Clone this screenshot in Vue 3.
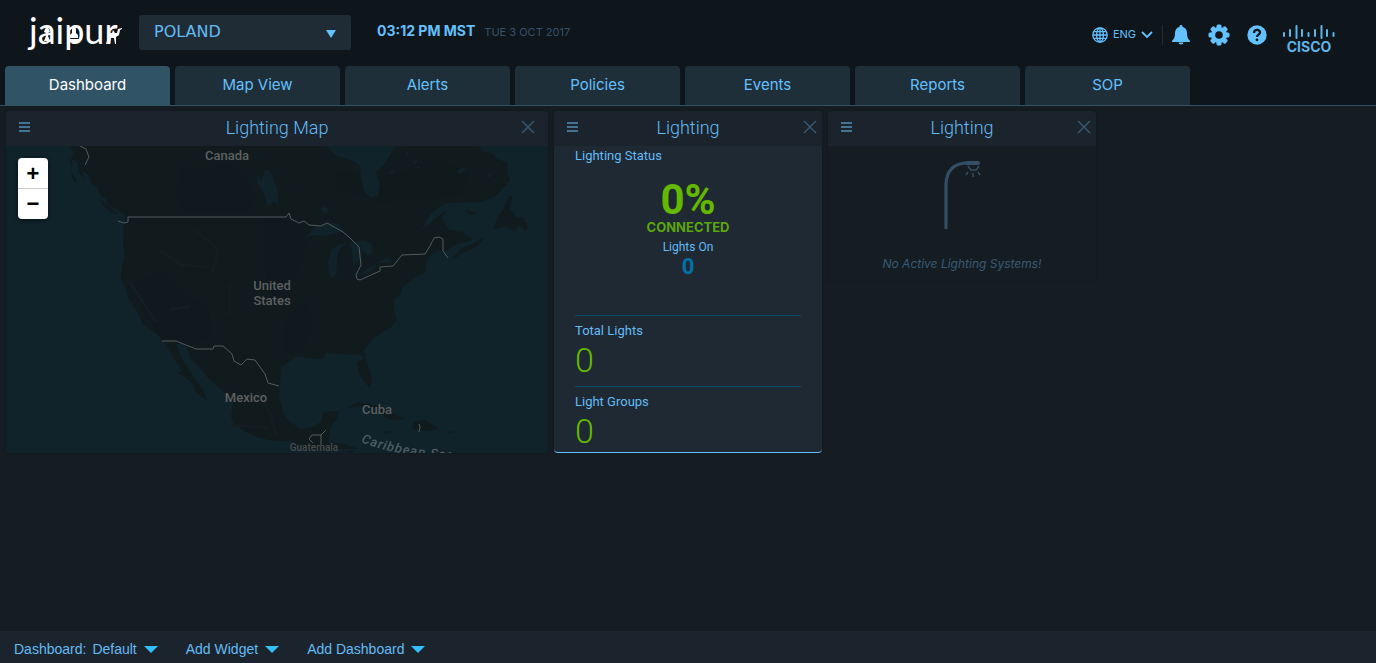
<script setup>
import { ref } from 'vue'

const tabs = ['Dashboard', 'Map View', 'Alerts', 'Policies', 'Events', 'Reports', 'SOP']
const activeTab = ref('Dashboard')
const city = ref('POLAND')
const widgets = [
  { id: 'map', title: 'Lighting Map' },
  { id: 'status', title: 'Lighting' },
  { id: 'empty', title: 'Lighting' },
]
const totals = [
  { label: 'Total Lights', value: 0 },
  { label: 'Light Groups', value: 0 },
]
const menus = [
  { id: 'dash', label: 'Dashboard:', value: 'Default' },
  { id: 'widget', label: 'Add Widget' },
  { id: 'add', label: 'Add Dashboard' },
]
</script>

<template>
  <div class="page">
    <header class="top">
      <svg class="brand" viewBox="0 0 98 50" role="img" aria-label="jaipur">
        <text x="4" y="39" class="brand-text">jaipur</text>
        <g fill="#fff">
          <path d="M19 27l1-3 2-2 2 2 1 3-2 1v3l2 5h-6l2-5v-3z" />
          <path d="M45 30l2-2v-4l2-4 2 4v4l2 2v3h-8zM43 34h12l-3 3h-6z" />
          <path d="M82 31q2-4 5-3l1-3 2 3h2l1-4 4-1v1l-2 1-1 5-3 2v7h-1l-1-6h-3l-1 6h-1v-6l-2 6h-1l2-7z" />
        </g>
      </svg>
      <div class="city">
        <select v-model="city" aria-label="City"><option>POLAND</option></select>
        <svg class="city-arrow" viewBox="0 0 10 8"><path d="M0 0h10L5 8z" /></svg>
      </div>
      <div class="clock"><strong>03:12 PM MST</strong><span>TUE 3 OCT 2017</span></div>
      <div class="tools">
        <button class="lang" type="button">
          <svg width="16" height="16" viewBox="0 0 16 16" fill="none" stroke="currentColor" stroke-width="1.3">
            <circle cx="8" cy="8" r="7.2" /><ellipse cx="8" cy="8" rx="3.4" ry="7.2" /><path d="M8 1v14M1 8h14M2 4.6h12M2 11.4h12" />
          </svg>
          <span>ENG</span>
          <svg width="12" height="8" viewBox="0 0 12 8" fill="none" stroke="currentColor" stroke-width="1.8"><path d="M1 1l5 5 5-5" /></svg>
        </button>
        <button class="tool bell" type="button" aria-label="Notifications">
          <svg width="20" height="20" viewBox="0 0 20 20"><path fill="currentColor" d="M10 0c1 0 1.500.7 1.500 1.700C14.500 2.500 16 5 16 8c0 4 .7 5.700 3 8v1H1v-1c2.300-2.300 3-4 3-8 0-3 1.500-5.500 4.500-6.300C8.500.7 9 0 10 0zM7.500 17.500h5a2.500 2 0 0 1-5 0z" /></svg>
        </button>
        <button class="tool" type="button" aria-label="Settings">
          <svg width="22" height="22" viewBox="0 0 22 22">
            <g fill="currentColor"><rect v-for="a in [0, 45, 90, 135]" :key="a" x="8.500" y="0.500" width="5" height="21" rx="1.500" :transform="`rotate(${a} 11 11)`" /><circle cx="11" cy="11" r="8" /></g>
            <circle cx="11" cy="11" r="3.800" fill="#0f161b" />
          </svg>
        </button>
        <button class="tool" type="button" aria-label="Help">
          <svg width="20" height="20" viewBox="0 0 20 20"><circle cx="10" cy="10" r="9.700" fill="currentColor" /><path d="M7 8c0-4 6-4 6-.6 0 2.200-3 2.300-3 4.600" fill="none" stroke="#0f161b" stroke-width="2.300" /><circle cx="10" cy="14.800" r="1.400" fill="#0f161b" /></svg>
        </button>
        <svg class="cisco" width="54" height="34" viewBox="0 0 54 34" role="img" aria-label="Cisco">
          <g stroke="#5fb4e8" stroke-width="2" stroke-linecap="round">
            <path d="M2 9v3M8 6v6M14.500 2v12M20 6v6M26.500 9v3M33 6v6M39.500 2v12M45 6v6M51.500 9v3" />
          </g>
          <text x="27" y="28" text-anchor="middle" class="cisco-text">CISCO</text>
        </svg>
      </div>
    </header>

    <nav class="tabs">
      <button v-for="t in tabs" :key="t" type="button" class="tab" :class="{ active: t === activeTab }" @click="activeTab = t">{{ t }}</button>
    </nav>

    <main class="board">
      <section v-for="w in widgets" :key="w.id" class="widget" :class="w.id">
        <div class="whead">
          <button type="button" class="icon" aria-label="Widget menu">
            <svg width="11" height="10" viewBox="0 0 11 10"><path fill="#437494" d="M0 0h11v2H0zM0 4h11v2H0zM0 8h11v2H0z" /></svg>
          </button>
          <h2>{{ w.title }}</h2>
          <button type="button" class="icon close" aria-label="Close widget">
            <svg width="14" height="14" viewBox="0 0 14 14"><path stroke="#375b76" stroke-width="1.400" d="M1 1l12 12M13 1L1 13" /></svg>
          </button>
        </div>

        <div v-if="w.id === 'map'" class="mapbody">
          <svg class="world" viewBox="6 146 542 307" preserveAspectRatio="xMidYMid slice">
            <rect x="6" y="146" width="542" height="307" fill="#10222a" />
            <path fill="#111b1d" d="M70 146l5 8-4 4 6 5 2 9 5 8-2-10 6 5 4 9 5 3 3 8 6 4 2 6 8 4 8 5 2 7-3 3 1 8-1 10 2 14-3 10-1 13 5 10 2 8 5 8 5 8 5 12 7 4 8 6 6 7 5 8 4 8 6 7 2 7-4 1 8 4 8 7 2 7 6 6 6 3-4-10-7-10-7-10-6-10-5-10-2-6 7-1 5 7 3 9 8 8 8 10 9 8 10 9 7 8-2 15 5 8 10 7 11 5 12 3 12 1h10l15 8h53l-15-5-16-1 1-9 3-10 6-6 1-7-15 1-3 10-8 5-12 2-11-7-7-10-4-15 1-15 1-14 7-6 9-6 11 2 14 1 5-6 15 1 8 1 8-1 7 4L357 362l2 11 6 10 5 5 2-8-3-12-4-10-1-8 6-8 8-7 12-7 7-8-3-8v-12l6-5 4-10 8-5 6-4 8-4-1-5 5-12 9-4 8-1 10-6 15-4-9-8-14-2-7-12 5-8-16 12-10 9 10-18 15-10 36-1 14-6 8-9 6-7-3-8 1-9-11-4-5-6-9-2-6-8z" />
            <g fill="#0f191f">
              <path d="M180 166l30 4 15-8 20 14 10 20-6 18h-64l-8-16zM265 218l24 2 20 8-5 25-10 28-20 20-10-35zM285 320l20-22 8 25-10 30-20 2z" opacity=".8" />
              <path d="M330 170l60 6 50-18 30 16-9 22-80 6-40-12z" fill="#101a1c" /><path d="M127 286l20 28 12 22 28 8 25-4-4-35-24-12-24-22z" opacity=".45" />
            </g>
            <g fill="#10222a">
              <path d="M327 146l8 9 20 7 5 4 1 14 3 10 6 8 8-2 2-12-4-12 8-8 7-10 5-8z" />
              <path d="M305 237l10-9 11-6 12 2 7 8-9 1-10 3-10-1zM329 275l-1-13 3-12 7-5 8-2-8 9-1 10-1 12-4 4zM350 243l14-3 8 4 1 9-6 3-5-7-1 10-8 6-1-15zM358 276l9-7 12-6-9 9zM378 263l8-5 8 3-8 2zM257 174l4 8 4-12 6 2 7 20 1 14-5-4-6 4-4-12-6-10zM321 208l5-2 2 5-4 3zM388 173l6-3-1 4zM404 154l4-3 1 5zM412 162l5-2-1 4zM417 166l4 2-4 1zM456 172l6-5 5 3-7 4zM486 177l8-6-4 6z" />
            </g>
            <g fill="#111b1d">
              <path d="M493 230l4-12 7-10 5-12h3l-2 13 7 9 6-1 5 10-3 5-5-7-6 6-10-5zM453 258l7-9 10-4 15-8-7 9-15 7-9 6zM466 209l11 5-8 1zM366 203l5-2 1 5zM347 408l10-6 14 2 11 3 10 6 13 6-13 1-9-5-8-7-13-2zM413 422l12-2 14 9-12 2-14-2zM384 431l9 1-8 2zM446 431l9 1-6 1zM343 451l13-1-5 3zM68 157l4 4 1 8zM71 170l7 14-5-4z" />
              <path d="M100 199l20 16-8-2-10-8z" opacity=".8" />
            </g>
            <g fill="none" stroke="#151e20" stroke-width="3" opacity=".8">
              <path d="M130 282l18 28 8 12M160 250l20 15 28 2M170 310l20-4M196 230l22 20-6 24M258 392l13 23 5 22M232 425l37 3M230 282v32" />
            </g>
            <g fill="none" stroke="#525a5c" stroke-width="1">
              <path d="M80 146l6 3 3 8-4 8M118 221l6 2 4-1v-5h158l3-4 2 6 8 4 5-2 5 4 12 1 6-3 16 9 6 5 10 10 2 18-5 10 1 4 3 1 20-9v-4l13-1 9-11 23-1 5-8 4-8 5-1 4 2v12l5 7" />
              <path d="M162 341h14l20 8h17l1-3h9l9 8 2 7 7 4 6-6 8 1 10 14 3 9 11 3M326 430l-5 5v10M321 435h-9l-3 4 4 4M419 424l1 3-1 5" />
            </g>
            <g class="maplabel">
              <text x="227" y="160">Canada</text><text x="272" y="290">United</text><text x="272" y="305">States</text>
              <text x="246" y="402">Mexico</text><text x="377" y="414">Cuba</text><text x="314" y="451" class="small">Guatemala</text>
            </g>
            <path id="caribbean-curve" d="M361 442Q395 457 475 461" fill="none" />
            <text class="sea"><textPath href="#caribbean-curve">Caribbean Sea</textPath></text>
          </svg>
          <div class="zoom"><button type="button" aria-label="Zoom in">+</button><button type="button" aria-label="Zoom out">−</button></div>
        </div>

        <div v-else-if="w.id === 'status'" class="statusbody">
          <h3>Lighting Status</h3>
          <div class="summary">
            <div class="pct">0%</div>
            <div class="conn">CONNECTED</div>
            <div class="on">Lights On</div>
            <div class="oncount">0</div>
          </div>
          <div v-for="t in totals" :key="t.label" class="total"><h3>{{ t.label }}</h3><div class="num">{{ t.value }}</div></div>
        </div>

        <div v-else class="emptybody">
          <svg width="40" height="70" viewBox="0 0 40 70" fill="none" stroke="#334e66">
            <path d="M4 69V24Q5 3 26 3h10" stroke-width="3.200" />
            <path d="M25 3h11" stroke-width="4" stroke-linecap="round" /><path d="M26 6l3 4h5l3-4" stroke-width="1.500" />
            <path d="M26 12l-2 3M31 13v4M36 12l2 3" stroke-width="1.500" />
          </svg>
          <p>No Active Lighting Systems!</p>
        </div>
      </section>
    </main>

    <footer class="bottom">
      <button v-for="m in menus" :key="m.id" type="button">
        <span>{{ m.label }}</span><span v-if="m.value">{{ m.value }}</span>
        <svg width="14" height="7" viewBox="0 0 14 7"><path fill="#33bfff" d="M0 0h14L7 7z" /></svg>
      </button>
    </footer>
  </div>
</template>

<style>
body { background: #151d23; }
</style>

<style scoped>
* { box-sizing: border-box; }
.page { min-height: 100vh; display: flex; flex-direction: column; background: #151d23; color: #64bbf5; font-family: "Liberation Sans", Arial, sans-serif; }
button { border: 0; background: none; padding: 0; color: inherit; font: inherit; cursor: pointer; }
h2, h3, p { margin: 0; font-weight: 400; }
svg { display: block; }
.top { background: #0f161b; height: 66px; display: flex; align-items: flex-start; padding: 15px 40px 0 25px; }
.brand { width: 98px; height: 50px; flex: none; margin-top: -10px; }
.brand-text { font: 400 36px Lato, sans-serif; fill: #fff; }
.city { position: relative; width: 212px; height: 35px; margin-left: 16px; }
.city select { appearance: none; width: 100%; height: 100%; border: 0; border-radius: 3px; background: #1f2c36; color: #64bbf5; padding: 0 15px 2px; font: 16px "DejaVu Sans", sans-serif; }
.city-arrow { position: absolute; right: 15px; top: 15px; width: 10px; height: 8px; fill: #64c1ff; pointer-events: none; }
.clock { display: flex; align-items: baseline; gap: 9px; margin-left: 26px; line-height: 32px; white-space: nowrap; font-family: Inter, sans-serif; }
.clock strong { font-size: 14px; font-weight: 700; color: #64c1ff; }
.clock span { font-size: 11px; color: #34526a; }
.tools { margin-left: auto; display: flex; align-items: center; height: 40px; color: #64c1ff; }
.lang { display: flex; align-items: center; gap: 5px; height: 20px; padding-right: 9px; border-right: 1px solid #1f2c36; font: 11px/14px Inter, sans-serif; }
.lang span { padding-bottom: 2px; }
.tool { margin-left: 17px; }
.bell { margin-left: 8px; }
.cisco { margin-left: 15px; margin-top: 12px; }
.cisco-text { font: 700 14px Inter, sans-serif; fill: #5fb4e8; }
.tabs { display: flex; gap: 5px; padding: 0 5px; background: #0f161b; border-bottom: 1px solid #305366; }
.tab { flex: 0 1 165px; height: 39px; border-radius: 4px 4px 0 0; background: #1f2f3a; color: #64c1ff; font: 15px Inter, sans-serif; padding-bottom: 2px; }
.tab.active { background: #305366; color: #fff; }
.board { flex: 1; display: flex; align-items: flex-start; gap: 6px; padding: 5px 6px; }
.widget { flex: 0 1 268px; border-radius: 4px; overflow: hidden; background: #1e2933; box-shadow: 0 0 2px #10171c; }
.widget.map { flex-basis: 542px; background: #10222a; }
.widget.status { border-bottom: 1px solid #64c1ff; }
.widget.empty { background: #151d23; }
.whead { height: 35px; display: grid; grid-template-columns: 28px 1fr 28px; align-items: center; padding-bottom: 4px; background: #1b242c; }
.whead h2 { font: 300 18px Roboto, sans-serif; text-align: center; padding-top: 2px; }
.icon { display: flex; padding-left: 13px; }
.icon.close { padding-left: 9px; }
.map .close { padding-left: 1px; }
.mapbody { position: relative; height: 307px; }
.world { width: 100%; height: 100%; }
.maplabel { font: 500 13px Roboto, sans-serif; fill: #5e6061; text-anchor: middle; }
.maplabel .small { font-size: 10px; fill: #484b4c; }
.sea { font: italic 500 13px Roboto, sans-serif; letter-spacing: 1px; fill: #4d5d64; }
.zoom { position: absolute; left: 12px; top: 12px; width: 30px; border-radius: 4px; background: #fff; box-shadow: 0 1px 4px #0008; }
.zoom button { display: block; width: 30px; height: 30px; color: #000; font: 700 22px/32px "Liberation Sans", sans-serif; }
.zoom button + button { border-top: 1px solid #ccc; height: 31px; line-height: 30px; }
.statusbody { padding: 0 21px; height: 306px; }
.statusbody h3 { font: 400 13px/20px Roboto, sans-serif; }
.summary { height: 149px; padding-top: 10px; text-align: center; }
.pct { color: #64b800; font: 700 42px/44px Roboto, sans-serif; padding-top: 2px; }
.conn { color: #5ba60b; font: 700 13px/16px Inter, sans-serif; margin-top: -3px; }
.on { margin-top: 4px; font: 12px/16px Roboto, sans-serif; }
.oncount { color: #0072a8; font: 700 22px/22px Roboto, sans-serif; margin-top: 1px; }
.total { height: 71px; border-top: 1px solid #0d4e66; padding-top: 5px; }
.num { color: #64b800; font: 300 34px/38px Roboto, sans-serif; }
.emptybody { display: flex; flex-direction: column; align-items: center; height: 135px; padding-top: 14px; }
.emptybody p { margin-top: 25px; color: #375b76; font: italic 400 12px/18px Inter, sans-serif; }
.bottom { height: 32px; display: flex; gap: 28px; padding: 4px 14px 0; align-items: center; background: #1b242c; }
.bottom button { display: flex; align-items: center; gap: 6px; font-size: 14px; }
.bottom svg { margin-left: 1px; }
</style>
